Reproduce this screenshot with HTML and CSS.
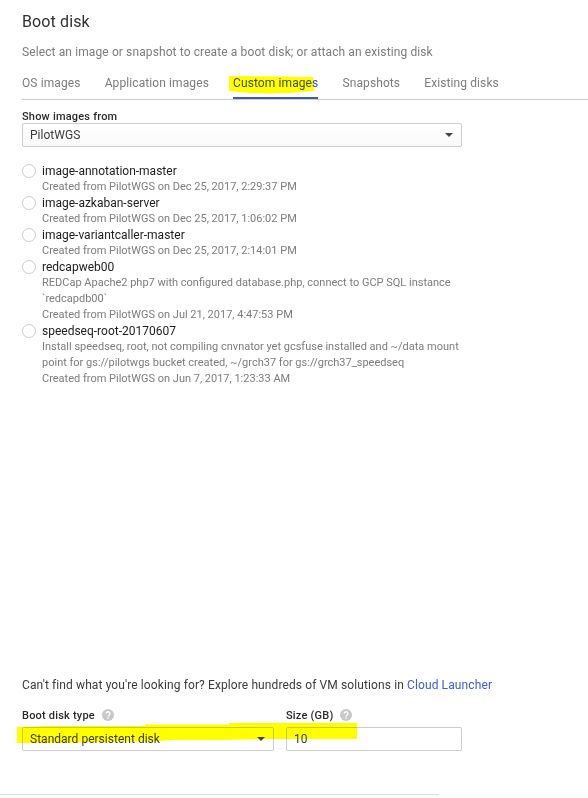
FILE: index.html
```html
<!DOCTYPE html>
<html lang="en">
<head>
<meta charset="utf-8">
<title>Boot disk</title>
<link rel="stylesheet" href="styles.css">
</head>
<body>
<main class="panel">
  <h1 class="title">Boot disk</h1>
  <p class="intro">Select an image or snapshot to create a boot disk; or attach an existing disk</p>
  <nav class="tabs">
    <a class="tab">OS images</a>
    <a class="tab">Application images</a>
    <a class="tab active">Custom images
      <svg class="marker marker-tab" width="88" height="20" viewBox="0 0 88 20"><path d="M0 1 L84 2 L85 16 Q60 18.5 40 18.5 Q18 18 0 16Z"/></svg>
    </a>
    <a class="tab">Snapshots</a>
    <a class="tab">Existing disks</a>
  </nav>
  <section class="source">
    <div class="label">Show images from</div>
    <div class="field select wide"><span>PilotWGS</span><i class="arrow"></i></div>
  </section>
  <ul class="images">
    <li class="image"><i class="radio"></i><div><div class="name">image-annotation-master</div><div class="meta">Created from PilotWGS on Dec 25, 2017, 2:29:37 PM</div></div></li>
    <li class="image"><i class="radio"></i><div><div class="name">image-azkaban-server</div><div class="meta">Created from PilotWGS on Dec 25, 2017, 1:06:02 PM</div></div></li>
    <li class="image"><i class="radio"></i><div><div class="name">image-variantcaller-master</div><div class="meta">Created from PilotWGS on Dec 25, 2017, 2:14:01 PM</div></div></li>
    <li class="image"><i class="radio"></i><div><div class="name">redcapweb00</div><div class="meta">REDCap Apache2 php7 with configured database.php, connect to GCP SQL instance<br>`redcapdb00`</div><div class="meta">Created from PilotWGS on Jul 21, 2017, 4:47:53 PM</div></div></li>
    <li class="image"><i class="radio"></i><div><div class="name">speedseq-root-20170607</div><div class="meta">Install speedseq, root, not compiling cnvnator yet gcsfuse installed and ~/data mount<br>point for gs://pilotwgs bucket created, ~/grch37 for gs://grch37_speedseq</div><div class="meta">Created from PilotWGS on Jun 7, 2017, 1:23:33 AM</div></div></li>
  </ul>
  <p class="hint">Can't find what you're looking for? Explore hundreds of VM solutions in <a class="link">Cloud Launcher</a></p>
  <section class="disk">
    <div class="type">
      <div class="label">Boot disk type <svg class="help" width="12" height="12" viewBox="0 0 12 12"><circle cx="6" cy="6" r="6"/><path d="M4.1 4.8a1.9 1.9 0 1 1 3 1.4Q6 6.8 6 7.7M6 8.6v1.3"/></svg></div>
      <div class="field select"><span>Standard persistent disk</span><i class="arrow"></i></div>
    </div>
    <div class="size">
      <div class="label">Size (GB) <svg class="help" width="12" height="12" viewBox="0 0 12 12"><circle cx="6" cy="6" r="6"/><path d="M4.1 4.8a1.9 1.9 0 1 1 3 1.4Q6 6.8 6 7.7M6 8.6v1.3"/></svg></div>
      <div class="field"><span>10</span></div>
    </div>
    <svg class="marker marker-disk" width="341" height="22" viewBox="0 0 341 22"><path d="M0 5 L30 4 H128 V2.6 H212 V1 H340 V17 H252 L205 18 H155 L135 19.5 H98 Q50 21 0 21Z"/></svg>
  </section>
  <hr class="rule">
</main>
</body>
</html>
```
FILE: styles.css
```css
* { box-sizing: border-box; }
body { margin: 0; background: #fff; font: 12px/16px Roboto, sans-serif; color: #3a3a3a; }
.panel { height: 798px; padding-left: 22px; display: flex; flex-direction: column; overflow: hidden; }
.title { margin: 12px 0 0; font-size: 16px; line-height: 20px; font-weight: 400; color: #303030; letter-spacing: .12px; }
.intro { margin: 12px 0 0; color: #7c7c7c; letter-spacing: .11px; }
.tabs { display: flex; gap: 24.1px; height: 28px; margin-top: 12px; padding-top: 3px; border-bottom: 1px solid #ccc; color: #7c7c7c; letter-spacing: .1px; }
.tab { position: relative; height: 24px; white-space: nowrap; }
.active { color: #3f51b5; border-bottom: 2px solid #4656a8; }
.marker { position: absolute; fill: #ff0; mix-blend-mode: multiply; }
.marker-tab { left: -4px; top: 0; }
.source { margin-top: 9px; }
.label { font-weight: 500; font-size: 11px; color: #2a2a2a; letter-spacing: .2px; height: 14px; padding-top: 2px; display: flex; align-items: center; gap: 7px; }
.field { height: 24px; border: 1px solid #ccc; border-radius: 2px; padding: 0 8px 0 7px; display: flex; align-items: center; justify-content: space-between; letter-spacing: .02px; }
.wide { width: 440px; background: linear-gradient(#fff, #f9f9f9); }
.arrow { border: 4px solid transparent; border-top-color: #444; border-bottom: 0; }
.images { list-style: none; margin: 16px 0 0; padding: 0; }
.image { display: flex; gap: 6px; }
.radio { width: 14px; height: 14px; border: 1px solid #ccc; border-radius: 50%; margin-top: 1px; flex: none; }
.name { color: #1c1c1c; height: 16px; }
.meta { font-size: 11px; color: #7c7c7c; white-space: nowrap; }
.hint { margin: 290px 0 0; letter-spacing: .11px; }
.link { color: #3f5bd0; }
.disk { position: relative; display: flex; gap: 12px; margin-top: 15px; }
.type { width: 252px; }
.size { width: 176px; }
.disk .label { height: 19px; padding: 0 0 4px; }
.help { fill: #c8c8c8; margin-top: -1px; }
.help path { fill: none; stroke: #fff; stroke-width: 1.3; }
.marker-disk { left: -5px; top: 14px; }
.rule { width: 439px; margin: 43px 0 0 -22px; border: 0; border-top: 1px solid #ddd; }
```
